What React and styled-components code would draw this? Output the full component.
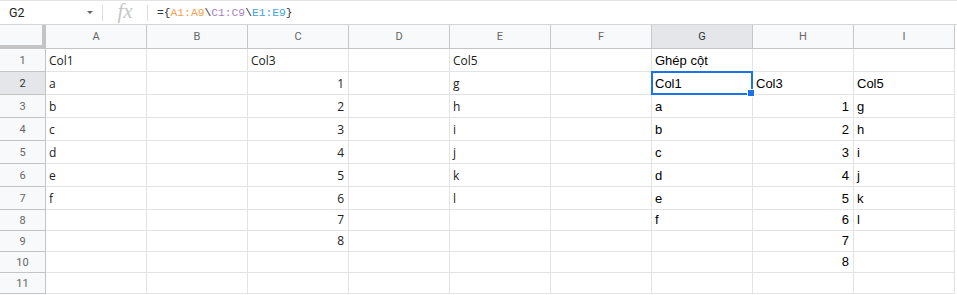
import React from 'react'
import styled, { createGlobalStyle } from 'styled-components'

const GlobalStyle = createGlobalStyle`
  html, body {
    margin: 0;
    padding: 0;
    background: #fff;
  }
  body {
    font-family: Roboto, "Liberation Sans", Arial, sans-serif;
    overflow: hidden;
  }
`

const COLS = ['A', 'B', 'C', 'D', 'E', 'F', 'G', 'H', 'I']

// cells by row number: { col: [value, align] }
const DATA = {
  1: { A: 'Col1', C: 'Col3', E: 'Col5', G: 'Ghép cột' },
  2: { A: 'a', C: '1', E: 'g', G: 'Col1', H: 'Col3', I: 'Col5' },
  3: { A: 'b', C: '2', E: 'h', G: 'a', H: '1', I: 'g' },
  4: { A: 'c', C: '3', E: 'i', G: 'b', H: '2', I: 'h' },
  5: { A: 'd', C: '4', E: 'j', G: 'c', H: '3', I: 'i' },
  6: { A: 'e', C: '5', E: 'k', G: 'd', H: '4', I: 'j' },
  7: { A: 'f', C: '6', E: 'l', G: 'e', H: '5', I: 'k' },
  8: { C: '7', G: 'f', H: '6', I: 'l' },
  9: { C: '8', H: '7' },
  10: { H: '8' },
  11: {}
}

const ROW_HEIGHT = { 8: 21, 9: 21, 10: 21, 11: 21 }

const Page = styled.div`
  width: 957px;
  height: 295px;
  background: #fff;
`

const FormulaBar = styled.div`
  height: 25px;
  box-sizing: border-box;
  border-top: 1px solid #e3e3e3;
  border-bottom: 1px solid #d6d6d6;
  display: flex;
  align-items: center;
`

const NameBox = styled.div`
  width: 102px;
  box-sizing: border-box;
  padding: 0 8px 0 9px;
  display: flex;
  align-items: center;
  justify-content: space-between;
  font-size: 12.5px;
  color: #222;
`

const Caret = styled.span`
  width: 0;
  height: 0;
  border-left: 3px solid transparent;
  border-right: 3px solid transparent;
  border-top: 3px solid #666;
  margin-right: 1px;
`

const Divider = styled.span`
  width: 1px;
  height: 16px;
  background: #dadce0;
`

const FxLabel = styled.div`
  width: 44px;
  text-align: center;
  font-family: "Liberation Serif", serif;
  font-style: italic;
  font-size: 21px;
  color: #c4c7c9;
  line-height: 1;
  margin-top: -3px;
`

const Formula = styled.div`
  margin-left: 9px;
  font-family: "Liberation Mono", monospace;
  font-size: 11.3px;
  color: #333;
  white-space: pre;
`

const Ref = styled.span`
  color: ${p => p.$color};
`

const Grid = styled.div`
  display: grid;
  grid-template-columns: 46px repeat(9, 101px);
`

const Corner = styled.div`
  height: 24px;
  box-sizing: border-box;
  background: #f8f9fa;
  border-right: 4px solid #c4c4c4;
  border-bottom: 4px solid #c4c4c4;
`

const ColHead = styled.div`
  height: 24px;
  box-sizing: border-box;
  background: ${p => (p.$active ? '#e4e6ea' : '#f8f9fa')};
  border-right: 1px solid #c7c7c7;
  border-bottom: 1px solid #c4c4c4;
  display: flex;
  align-items: center;
  justify-content: center;
  font-size: 11px;
  color: ${p => (p.$active ? '#333' : '#666')};
`

const RowHead = styled.div`
  height: ${p => p.$h}px;
  box-sizing: border-box;
  background: ${p => (p.$active ? '#e4e6ea' : '#f8f9fa')};
  border-right: 1px solid #c4c4c4;
  border-bottom: 1px solid #c4c4c4;
  display: flex;
  align-items: center;
  justify-content: center;
  font-size: 11px;
  color: ${p => (p.$active ? '#333' : '#666')};
`

const Cell = styled.div`
  position: relative;
  height: ${p => p.$h}px;
  box-sizing: border-box;
  border-right: 1px solid #e2e3e3;
  border-bottom: 1px solid #e2e3e3;
  display: flex;
  align-items: flex-end;
  justify-content: ${p => (p.$right ? 'flex-end' : 'flex-start')};
  padding: 0 4px 2px 3px;
  font-family: ${p => (p.$arial ? '"Liberation Sans", Arial' : '"Open Sans"')}, sans-serif;
  font-size: ${p => (p.$arial ? '13px' : '12px')};
  color: ${p => (p.$arial ? '#000' : '#222')};
  line-height: 17px;
  white-space: nowrap;
`

const Selection = styled.div`
  position: absolute;
  left: -1px;
  top: -1px;
  right: -1px;
  bottom: -1px;
  border: 2px solid #1a73e8;
  pointer-events: none;
`

const FillHandle = styled.div`
  position: absolute;
  right: -4px;
  bottom: -4px;
  width: 6px;
  height: 6px;
  background: #1a73e8;
  border: 1px solid #fff;
  z-index: 2;
`

const isNumber = v => /^\d+$/.test(v)

const App = () => {
  const rows = Object.keys(DATA).map(Number)

  return (
    <Page>
      <GlobalStyle />
      <FormulaBar>
        <NameBox>
          G2
          <Caret />
        </NameBox>
        <Divider />
        <FxLabel>fx</FxLabel>
        <Divider />
        <Formula>
          ={'{'}
          <Ref $color="#f5a04c">A1:A9</Ref>\
          <Ref $color="#a97fc2">C1:C9</Ref>\
          <Ref $color="#43a3dc">E1:E9</Ref>
          {'}'}
        </Formula>
      </FormulaBar>
      <Grid>
        <Corner />
        {COLS.map(c => (
          <ColHead key={c} $active={c === 'G'}>
            {c}
          </ColHead>
        ))}
        {rows.map(r => {
          const h = ROW_HEIGHT[r] || 23
          return (
            <React.Fragment key={r}>
              <RowHead $h={h} $active={r === 2}>
                {r}
              </RowHead>
              {COLS.map(c => {
                const v = DATA[r][c]
                const selected = r === 2 && c === 'G'
                return (
                  <Cell
                    key={c}
                    $h={h}
                    $right={v && isNumber(v)}
                    $arial={c >= 'G'}
                  >
                    {v}
                    {selected && (
                      <Selection>
                        <FillHandle />
                      </Selection>
                    )}
                  </Cell>
                )
              })}
            </React.Fragment>
          )
        })}
      </Grid>
    </Page>
  )
}

export default App
